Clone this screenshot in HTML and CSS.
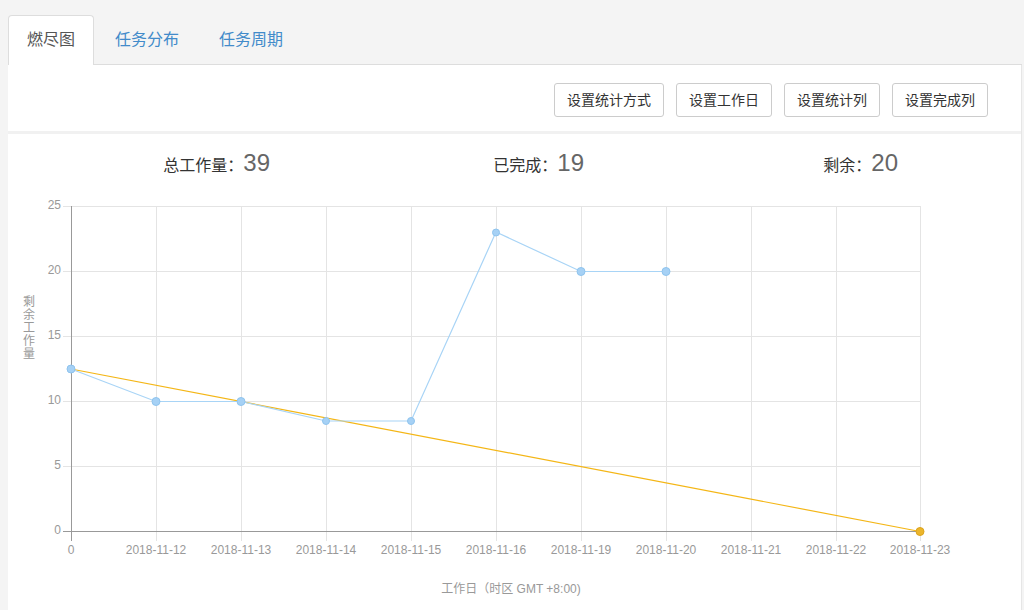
FILE: index.html
```html
<!DOCTYPE html>
<html lang="zh-CN">
<head>
<meta charset="utf-8">
<title>燃尽图</title>
<link rel="stylesheet" href="styles.css">
</head>
<body>
<div class="page">
  <ul class="tabs">
    <li class="tab active">燃尽图</li>
    <li class="tab">任务分布</li>
    <li class="tab">任务周期</li>
  </ul>
  <div class="panel">
    <div class="toolbar">
      <button class="btn">设置统计方式</button>
      <button class="btn">设置工作日</button>
      <button class="btn">设置统计列</button>
      <button class="btn">设置完成列</button>
    </div>
    <div class="chart-card">
      <div class="stats">
        <div class="stat"><span class="stat-label">总工作量：</span><span class="stat-num">39</span></div>
        <div class="stat"><span class="stat-label">已完成：</span><span class="stat-num">19</span></div>
        <div class="stat"><span class="stat-label">剩余：</span><span class="stat-num">20</span></div>
      </div>
      <svg class="chart" width="1014" height="415" viewBox="0 0 1014 415">
        <g transform="translate(-8,-195)">
          <g class="grid">
            <line x1="63" y1="205.5" x2="920" y2="205.5"/>
            <line x1="63" y1="270.5" x2="920" y2="270.5"/>
            <line x1="63" y1="335.5" x2="920" y2="335.5"/>
            <line x1="63" y1="400.5" x2="920" y2="400.5"/>
            <line x1="63" y1="465.5" x2="920" y2="465.5"/>
            <line x1="156.5" y1="205" x2="156.5" y2="540"/>
            <line x1="241.5" y1="205" x2="241.5" y2="540"/>
            <line x1="326.5" y1="205" x2="326.5" y2="540"/>
            <line x1="411.5" y1="205" x2="411.5" y2="540"/>
            <line x1="496.5" y1="205" x2="496.5" y2="540"/>
            <line x1="581.5" y1="205" x2="581.5" y2="540"/>
            <line x1="666.5" y1="205" x2="666.5" y2="540"/>
            <line x1="751.5" y1="205" x2="751.5" y2="540"/>
            <line x1="836.5" y1="205" x2="836.5" y2="540"/>
            <line x1="920.5" y1="205" x2="920.5" y2="540"/>
          </g>
          <g class="axis">
            <line x1="71.5" y1="205" x2="71.5" y2="540"/>
            <line x1="63" y1="530.5" x2="920" y2="530.5"/>
          </g>
          <g class="ylabels">
            <text x="61" y="205">25</text>
            <text x="61" y="270">20</text>
            <text x="61" y="335">15</text>
            <text x="61" y="400">10</text>
            <text x="61" y="465">5</text>
            <text x="61" y="530">0</text>
          </g>
          <g class="xlabels">
            <text x="71" y="553">0</text>
            <text x="156" y="553">2018-11-12</text>
            <text x="241" y="553">2018-11-13</text>
            <text x="326" y="553">2018-11-14</text>
            <text x="411" y="553">2018-11-15</text>
            <text x="496" y="553">2018-11-16</text>
            <text x="581" y="553">2018-11-19</text>
            <text x="666" y="553">2018-11-20</text>
            <text x="751" y="553">2018-11-21</text>
            <text x="836" y="553">2018-11-22</text>
            <text x="920" y="553">2018-11-23</text>
          </g>
          <g class="ytitle">
            <text x="29" y="302">剩</text>
            <text x="29" y="315">余</text>
            <text x="29" y="328">工</text>
            <text x="29" y="341">作</text>
            <text x="29" y="354">量</text>
          </g>
          <text class="xtitle" x="511" y="592">工作日（时区 GMT +8:00)</text>
          <polyline class="ideal" points="71,368 920,530.5"/>
          <circle class="ideal-pt" cx="920" cy="530.5" r="4"/>
          <polyline class="actual" points="71,368 156,400.5 241,400.5 326,420 411,420 496,231 581,270.5 666,270.5"/>
          <g class="actual-pts">
            <circle cx="71" cy="368" r="4"/>
            <circle cx="156" cy="400.5" r="4"/>
            <circle cx="241" cy="400.5" r="4"/>
            <circle cx="326" cy="420" r="3.5"/>
            <circle cx="411" cy="420" r="3.5"/>
            <circle cx="496" cy="231.5" r="3.5"/>
            <circle cx="581" cy="270.5" r="4"/>
            <circle cx="666" cy="270.5" r="4"/>
          </g>
        </g>
      </svg>
    </div>
  </div>
</div>
</body>
</html>
```
FILE: styles.css
```css
html, body {
  margin: 0;
  padding: 0;
  background: #f4f4f4;
  font-family: "Liberation Sans", "Noto Sans CJK SC", sans-serif;
  overflow: hidden;
}
.page {
  padding: 15px 2px 0 8px;
  height: 610px;
  box-sizing: border-box;
  display: flex;
  flex-direction: column;
}
.tabs {
  list-style: none;
  margin: 0;
  padding: 0;
  display: flex;
  border-bottom: 1px solid #dddddd;
}
.tab {
  padding: 13px 18px;
  line-height: 22px;
  font-size: 16px;
  color: #428bca;
  margin-right: 2px;
  border: 1px solid transparent;
  border-bottom: none;
  border-radius: 4px 4px 0 0;
  margin-bottom: -1px;
}
.tab.active {
  background: #ffffff;
  color: #555555;
  border-color: #dddddd;
  padding-bottom: 14px;
}
.panel {
  flex: 1;
  background: #ffffff;
  border-right: 1px solid #e6e6e6;
  display: flex;
  flex-direction: column;
}
.toolbar {
  display: flex;
  justify-content: flex-end;
  gap: 12px;
  padding: 18px 33px 14px 0;
  border-bottom: 3px solid #f1f1f1;
}
.btn {
  font-family: "Liberation Sans", "Noto Sans CJK SC", sans-serif;
  font-size: 14px;
  color: #333333;
  background: #ffffff;
  border: 1px solid #cccccc;
  border-radius: 3px;
  height: 34px;
  padding: 0 12px;
  line-height: 32px;
}
.chart-card {
  flex: 1;
}
.stats {
  display: grid;
  grid-template-columns: 262px 314px 314px;
  padding: 15px 0 16px;
  line-height: 28px;
}
.stat {
  text-align: right;
}
.stat-label {
  font-size: 16px;
  color: #333333;
}
.stat-num {
  font-size: 24px;
  color: #666666;
}
.chart {
  display: block;
  font-family: "Liberation Sans", "Noto Sans CJK SC", sans-serif;
}
.grid line {
  stroke: #e4e4e4;
  stroke-width: 1;
}
.axis line {
  stroke: #999999;
  stroke-width: 1;
}
.ylabels text {
  font-size: 12px;
  fill: #999999;
  text-anchor: end;
  dominant-baseline: middle;
}
.xlabels text {
  font-size: 12px;
  fill: #999999;
  text-anchor: middle;
}
.ytitle text {
  font-size: 12px;
  fill: #999999;
  text-anchor: middle;
  dominant-baseline: middle;
}
.xtitle {
  font-size: 12px;
  fill: #999999;
  text-anchor: middle;
}
.ideal {
  fill: none;
  stroke: #f4b616;
  stroke-width: 1.2;
}
.ideal-pt {
  fill: #ebb52b;
  stroke: #dca31c;
  stroke-width: 1;
}
.actual {
  fill: none;
  stroke: #a8d4f6;
  stroke-width: 1.2;
}
.actual-pts circle {
  fill: #a6d1f5;
  stroke: #8fc4ee;
  stroke-width: 1;
}
```
